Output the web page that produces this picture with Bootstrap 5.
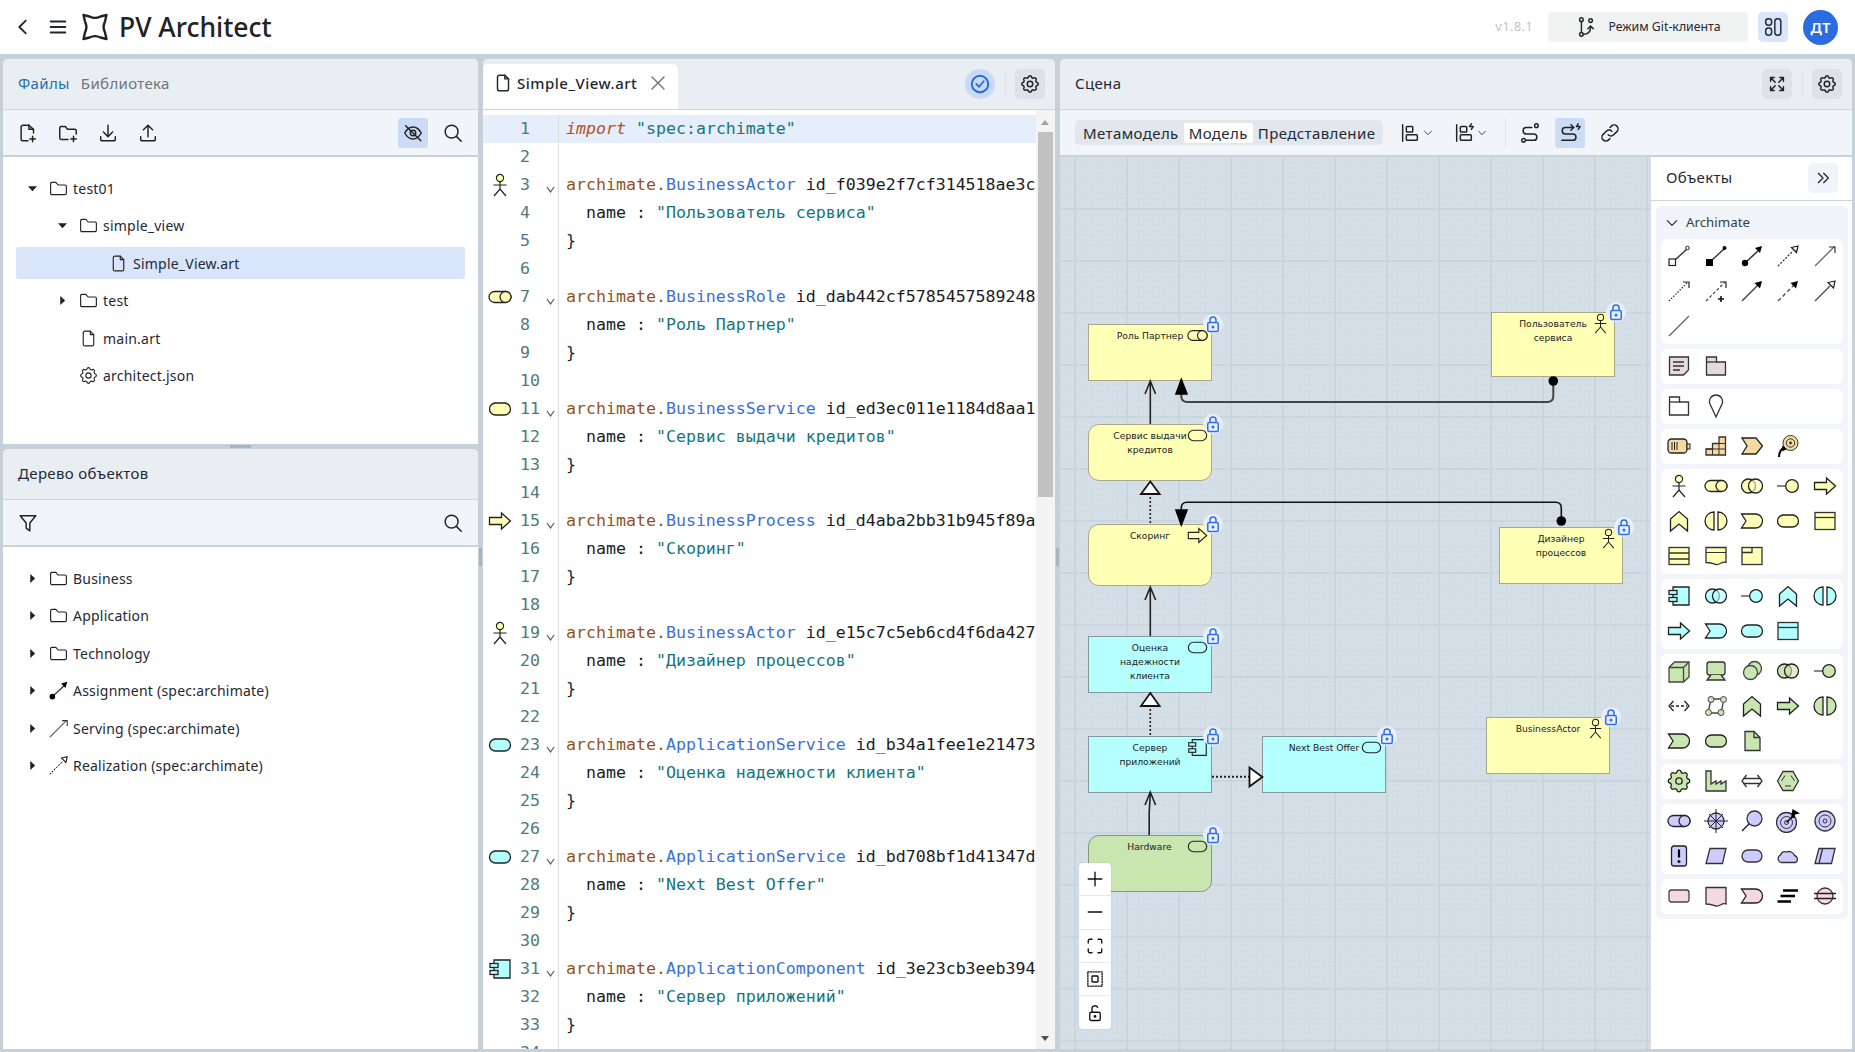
<!DOCTYPE html>
<html lang="ru">
<head>
<meta charset="UTF-8">
<meta name="viewport" content="width=device-width, initial-scale=1.0">
<title>PV Architect</title>
<link href="https://cdn.jsdelivr.net/npm/bootstrap@5.3.0/dist/css/bootstrap.min.css" rel="stylesheet">
<style>
    html, body { height: 100%; }
    body { background: #c6d0d9; font-family: "Noto Sans", "Liberation Sans", sans-serif; font-size: 14px; color: #1f2933; overflow: hidden; }
    svg { display: block; }
    .stroke-ico { width: 22px; height: 22px; fill: none; stroke: currentColor; stroke-width: 1.6; stroke-linecap: round; stroke-linejoin: round; }

    .app-header { height: 54px; background: #fff; padding: 0 17px 0 8px; }
    .header-btn { width: 30px; height: 30px; }
    .header-btn + .header-btn { margin-left: 5px; }
    .header-btn .stroke-ico { stroke-width: 2; }
    .app-logo { width: 28px; height: 28px; margin-left: 8px; }
    .app-title { font-size: 26.5px; font-weight: 500; line-height: 1; margin-left: 10px; color: #222; }
    .app-version { font-size: 13px; color: #c2c6ca; margin-right: 15px; letter-spacing: .3px; }
    .git-btn { width: 200px; height: 30px; background: #f0f2f2; border-radius: 5px; font-size: 12.3px; gap: 11px; margin-right: 10px; }
    .layout-btn { width: 30px; height: 30px; background: #d9e5fb; border-radius: 5px; margin-right: 15px; }
    .user-avatar { width: 35px; height: 35px; border-radius: 50%; background: #2b6ce0; color: #fff; font-weight: 600; font-size: 15px; }

    .workspace { height: calc(100vh - 54px); padding: 5px 3px 3px; }
    .col-left { width: 475px; flex: none; }
    .col-mid { width: 572px; flex: none; }
    .col-right { flex: 1 1 0; min-width: 0; }
    .splitter-v { width: 5px; flex: none; position: relative; }
    .splitter-v::after { content: ""; position: absolute; left: 1px; top: 489px; width: 3px; height: 18px; background: #a9b6c0; }
    .splitter-h { height: 5px; flex: none; position: relative; }
    .splitter-h::after { content: ""; position: absolute; left: 227px; top: 1px; width: 21px; height: 3px; background: #a9b6c0; }

    .pane { background: #fff; border-radius: 5px 5px 0 0; overflow: hidden; }
    .pane-top { height: 385px; flex: none; }
    .pane-head { height: 51px; flex: none; background: #e9eef2; border-bottom: 1px solid #ccd5dc; padding: 0 10px 0 15px; font-size: 15px; letter-spacing: .35px; }
    .head-label { margin-top: -2px; }
    .pane-tools { height: 47px; flex: none; background: #f1f5f9; border-bottom: 2px solid #c8d2db; padding: 0 10px; }
    .tab-on { color: #1f6fb2; }
    .tab-off { color: #6c757d; margin-left: 11px; }
    .tool-btn { width: 30px; height: 30px; border-radius: 3px; color: #222; flex: none; }
    .tool-step { margin-left: 2px; }
    .tool-on { background: #cddcf6; }
    .tool-soft { background: #dbe3e9; border-radius: 5px; }
    .tool-check { background: #c9d9f6; border-radius: 50%; }
    .head-sep { width: 1px; height: 30px; background: #dde4ea; margin: 0 9.5px; }

    .tree-list { padding-top: 15px; letter-spacing: .22px; }
    .tree-row { height: 32px; margin: 0 13px 5.5px; border-radius: 3px; }
    .tree-row.is-picked { background: #d9e5fb; }
    .tree-row.lvl-1 { padding-left: 30px; }
    .tree-row.lvl-2 { padding-left: 60px; }
    .tree-caret { width: 32px; flex: none; }
    .caret-shape { width: 9px; height: 9px; fill: #222; margin: 0 auto; }
    .tree-ico { width: 21px; height: 21px; margin-right: 4px; flex: none; color: #222; }
    .tree-ico.stroke-ico { stroke-width: 1.3; }

    .doc-tab { width: 195px; height: 45px; background: #fff; border-radius: 5px 5px 0 0; margin-left: -15px; padding: 0 0 7px 9px; font-size: 15px; font-weight: 500; letter-spacing: .5px; gap: 3px; align-self: flex-end; }
    .doc-close { width: 14px; height: 14px; margin-left: 11px; color: #6b7278; stroke-width: 1.4; }
    .editor-body { min-height: 0; }
    .code-scroll { padding-top: 5px; min-width: 0; overflow: hidden; }
    .code-line { height: 28px; font-family: "DejaVu Sans Mono", "Liberation Mono", monospace; font-size: 16.6px; line-height: 28px; white-space: pre; }
    .code-line.is-current { background: #e6edfb; }
    .gut-glyph { width: 37px; flex: none; }
    .gut-glyph svg { width: 24px; height: 24px; margin: 2px 0 0 5px; }
    .gut-num { width: 24px; flex: none; color: #4f7a7c; }
    .gut-fold { width: 14px; flex: none; border-right: 0; }
    .gut-fold svg { width: 9px; height: 7px; margin: 15px 0 0 2px; fill: none; stroke: #556; stroke-width: 1.2; }
    .code-text { border-left: 1px solid #dcdfe2; padding-left: 7px; flex: 1 1 0; min-width: 0; overflow: hidden; color: #1c1c1c; }
    .syn-kw { color: #b5501f; font-style: italic; }
    .syn-ns { color: #94511c; }
    .syn-type { color: #3b6fd6; }
    .syn-str { color: #17767c; }
    .code-bar { width: 19px; flex: none; background: #f4f4f4; position: relative; padding: 22px 2px 0; }
    .code-thumb { height: 365px; background: #c1c1c1; }
    .code-arrow { position: absolute; left: 5px; width: 0; height: 0; border-left: 4.5px solid transparent; border-right: 4.5px solid transparent; }
    .code-arrow.up { top: 10px; border-bottom: 5px solid #a3a3a3; }
    .code-arrow.down { bottom: 8px; border-top: 5px solid #505050; }

    .seg-group { height: 25px; background: #e1e7ec; border-radius: 5px; padding: 0 3px; margin-left: 5px; font-size: 15px; letter-spacing: .4px; }
    .seg-item { padding: 0 5px; height: 20px; line-height: 20px; border-radius: 2px; }
    .seg-item.is-on { background: #fff; }
    .drop-btn { gap: 2px; color: #222; margin-left: 16px; }
    .drop-btn + .drop-btn { margin-left: 20px; }
    .drop-chev { width: 10px; height: 10px; stroke-width: 2; }
    .tools-sep { width: 1px; height: 30px; background: #dde4ea; margin: 0 9px 0 18px; }
    .tools-gap { margin-left: 10px; }

    .diagram { width: 590px; flex: none; position: relative; overflow: hidden; background-color: #d5dfe7;
        background-image: linear-gradient(#d1dbe3 1px, transparent 1px), linear-gradient(90deg, #d1dbe3 1px, transparent 1px);
        background-size: 5.2px 5.2px; }
    .grid-h, .grid-v { position: absolute; inset: 0; pointer-events: none; }
    .grid-h { background: repeating-linear-gradient(to bottom, transparent 0 50px, #cad5dd 50px 52px); top: 1px; }
    .grid-v { background: repeating-linear-gradient(to right, transparent 0 50px, #cad5dd 50px 52px); left: -36px; }
    .edge-layer { position: absolute; left: 0; top: 0; width: 590px; height: 892px; z-index: 1; }
    .diag-node { position: absolute; width: 124px; height: 57px; border: 1.5px solid #8d8f86; text-align: center; font-family: "DejaVu Sans", sans-serif; font-size: 9.2px; line-height: 14px; padding-top: 4px; color: #222; }
    .node-yellow { background: #ffffb5; border-color: #a9a88a; }
    .node-cyan { background: #b5ffff; border-color: #86979b; }
    .node-green { background: #c9e5b0; border-color: #8a9286; }
    .node-round { border-radius: 11px; }
    .node-glyph { position: absolute; right: 3px; top: 0; width: 21px; height: 21px; }
    .node-lock { position: absolute; right: -12px; top: -11px; width: 20px; height: 20px; border-radius: 50%; background: #e9eff9; z-index: 2; }
    .node-lock svg { width: 18px; height: 18px; margin: 1px; fill: none; stroke: #2f6fed; stroke-width: 2; }
    .at-role { left: 28px; top: 167px; }
    .at-user { left: 431px; top: 155px; height: 65px; }
    .at-service { left: 28px; top: 267px; }
    .at-score { left: 28px; top: 367px; height: 62px; }
    .at-designer { left: 439px; top: 370px; }
    .at-assess { left: 28px; top: 479px; }
    .at-server { left: 28px; top: 579px; }
    .at-offer { left: 202px; top: 579px; }
    .at-bactor { left: 426px; top: 560px; }
    .at-hw { left: 27.5px; top: 678px; }
    .zoom-box { position: absolute; left: 19px; top: 706px; width: 32px; background: #fff; border-radius: 4px; z-index: 3; box-shadow: 0 0 2px rgba(0,0,0,.1); }
    .zoom-btn { height: 33.3px; border-bottom: 1px solid #e7eaed; color: #111; }
    .zoom-btn:last-child { border-bottom: 0; }
    .zoom-btn svg { width: 18px; height: 18px; stroke-width: 1.8; }

    .palette { min-width: 0; border-left: 1px solid #d4dde5; }
    .pal-head { height: 44px; flex: none; border-bottom: 1px solid #ccd5dc; padding: 0 14px 2px 15px; font-size: 15px; letter-spacing: .35px; }
    .pal-fold { width: 30px; height: 30px; background: #f1f5f9; border-radius: 5px; }
    .pal-fold svg { width: 16px; height: 16px; stroke-width: 2; }
    .pal-box { margin: 5px 4px 0 5px; background: #f1f5f9; border-radius: 6px; padding: 0 5px 5px; }
    .pal-title { height: 33px; font-size: 13.3px; padding-left: 4px; gap: 7px; color: #33404c; }
    .pal-title svg { width: 14px; height: 14px; stroke-width: 1.8; color: #222; }
    .pal-group { display: grid; grid-template-columns: repeat(5, 1fr); grid-auto-rows: 35px; background: #fff; border-radius: 6px; margin-bottom: 5px; }
    .pal-group:last-child { margin-bottom: 0; }
    .pal-ico { width: 24px; height: 24px; place-self: center; margin-bottom: 2px; }
    .t-note { color: #e6d9e2; }
    .t-none { color: #fff; }
    .t-strat { color: #f5d9a3; }
    .t-biz { color: #ffffb5; }
    .t-app { color: #b5ffff; }
    .t-tech { color: #c9e5b0; }
    .t-motiv { color: #ccccff; }
    .t-impl { color: #f5d8e0; }
</style>
</head>
<body>
<svg width="0" height="0" class="position-absolute">
    <defs>
        <!-- ui icons -->
        <symbol id="u-gear" viewBox="0 0 24 24"><path d="M10.325 4.317c.426-1.756 2.924-1.756 3.35 0a1.724 1.724 0 0 0 2.573 1.066c1.543-.94 3.31.826 2.37 2.37a1.724 1.724 0 0 0 1.065 2.572c1.756.426 1.756 2.924 0 3.35a1.724 1.724 0 0 0-1.066 2.573c.94 1.543-.826 3.31-2.37 2.37a1.724 1.724 0 0 0-2.572 1.065c-.426 1.756-2.924 1.756-3.35 0a1.724 1.724 0 0 0-2.573-1.066c-1.543.94-3.31-.826-2.37-2.37a1.724 1.724 0 0 0-1.065-2.572c-1.756-.426-1.756-2.924 0-3.35a1.724 1.724 0 0 0 1.066-2.573c-.94-1.543.826-3.31 2.37-2.37 1 .608 2.296.07 2.572-1.065z"/><circle cx="12" cy="12" r="3"/></symbol>
        <symbol id="u-search" viewBox="0 0 24 24"><circle cx="10.5" cy="10.5" r="7"/><path d="M15.7 15.7 21 21"/></symbol>
        <symbol id="u-folder" viewBox="0 0 24 24"><path d="M3 6.5a1.5 1.5 0 0 1 1.5-1.5H9l2.5 3h8A1.5 1.5 0 0 1 21 9.500v8a1.500 1.500 0 0 1-1.500 1.500h-15A1.500 1.500 0 0 1 3 17.500z"/></symbol>
        <symbol id="u-file" viewBox="0 0 24 24"><path d="M14 3.500H8A2 2 0 0 0 6 5.500v13a2 2 0 0 0 2 2h8a2 2 0 0 0 2-2V7.500z"/><path d="M14 3.500v4h4"/></symbol>
        <symbol id="u-file-add" viewBox="0 0 24 24"><path d="M13 3.500H6.500a2 2 0 0 0-2 2v13a2 2 0 0 0 2 2H12"/><path d="M13 3.500l5 4.500v4"/><path d="M13 3.500V8h5"/><path d="M17 15.500v6M14 18.500h6"/></symbol>
        <symbol id="u-folder-add" viewBox="0 0 24 24"><path d="M12 19H4.500A1.500 1.500 0 0 1 3 17.500v-11A1.500 1.500 0 0 1 4.500 5H9l2.500 3h8A1.500 1.500 0 0 1 21 9.500V13"/><path d="M18 15.500v6M15 18.500h6"/></symbol>
        <symbol id="u-down" viewBox="0 0 24 24"><path d="M12 3.500v12M7 11l5 5 5-5M4 16v2.500a2 2 0 0 0 2 2h12a2 2 0 0 0 2-2V16"/></symbol>
        <symbol id="u-up" viewBox="0 0 24 24"><path d="M12 16V4M7 8.500l5-5 5 5M4 16v2.500a2 2 0 0 0 2 2h12a2 2 0 0 0 2-2V16"/></symbol>
        <symbol id="u-eye-off" viewBox="0 0 24 24"><path d="M3 12c2.500-4.500 5.500-6.500 9-6.500s6.500 2 9 6.500c-2.500 4.500-5.500 6.500-9 6.500S5.500 16.500 3 12z"/><circle cx="12" cy="12" r="3"/><path d="M4 4l16.500 16.500"/></symbol>
        <symbol id="u-filter" viewBox="0 0 24 24"><path d="M3.500 4h17l-6.500 8v8.500l-4-3V12z"/></symbol>
        <symbol id="u-expand" viewBox="0 0 24 24"><path d="M5 9V5h4M19 9V5h-4M5 15v4h4M19 15v4h-4M5 5l5 5M19 5l-5 5M5 19l5-5M19 19l-5-5"/></symbol>
        <symbol id="u-align" viewBox="0 0 24 24"><path d="M4 3v18"/><rect x="8" y="5" width="7" height="6" rx="1"/><rect x="8" y="14" width="12" height="6" rx="1"/></symbol>
        <symbol id="u-align-auto" viewBox="0 0 24 24"><path d="M4 3v18"/><rect x="8" y="5" width="7" height="6" rx="1"/><rect x="8" y="14" width="12" height="6" rx="1"/><path d="M20 2l-2 3h4l-2 3"/></symbol>
        <symbol id="u-route" viewBox="0 0 24 24"><circle cx="5" cy="20" r="2"/><circle cx="19" cy="4" r="2"/><path d="M8 20h8a3.500 3.500 0 0 0 0-7H8a3.500 3.500 0 0 1 0-7h6"/></symbol>
        <symbol id="u-route-auto" viewBox="0 0 24 24"><path d="M3 20h12a3.500 3.500 0 0 0 0-7H7a3.500 3.500 0 0 1 0-7h9"/><path d="M13 3l3 3-3 3"/><path d="M21 2l-2 3h4l-2 3"/></symbol>
        <symbol id="u-link" viewBox="0 0 24 24"><path d="M10 14a4 4 0 0 0 6 0l3.500-3.500a4 4 0 0 0-6-6L12 6"/><path d="M14 10a4 4 0 0 0-6 0l-3.500 3.500a4 4 0 0 0 6 6L12 18"/></symbol>
        <symbol id="u-git" viewBox="0 0 24 24"><circle cx="7" cy="4" r="2"/><circle cx="7" cy="20" r="2"/><circle cx="17" cy="5" r="2"/><path d="M7 6v12M9 20c4 0 8-2 8-8M14 14l3-3 3 3"/></symbol>
        <symbol id="u-panels" viewBox="0 0 24 24"><rect x="4" y="3" width="6.500" height="7" rx="3"/><rect x="4" y="13" width="6.500" height="8" rx="3"/><rect x="14" y="3" width="6.500" height="18" rx="3"/></symbol>
        <symbol id="u-lock" viewBox="0 0 24 24"><rect x="5" y="10" width="14" height="12" rx="2"/><path d="M8 10V6.500a4 4 0 0 1 8 0V10"/><circle cx="12" cy="16" r="1" fill="#2f6fed"/></symbol>
        <symbol id="u-unlock" viewBox="0 0 24 24"><rect x="5" y="11" width="14" height="11" rx="2"/><path d="M8 11V6.500a4 4 0 0 1 7.500-2"/><circle cx="12" cy="16.500" r="1" fill="#111"/></symbol>

        <!-- relations -->
        <symbol id="r-compo" viewBox="0 0 24 24"><path d="M8 16 20 5" stroke="#333" stroke-width="1.400"/><rect x="2" y="15" width="6.500" height="6.500" fill="#fff" stroke="#222" stroke-width="1.200"/><circle cx="20.500" cy="4" r="1.800" fill="#fff" stroke="#222"/></symbol>
        <symbol id="r-aggr" viewBox="0 0 24 24"><path d="M8 16 20 5" stroke="#333" stroke-width="1.400"/><rect x="2" y="15" width="7" height="7" fill="#000"/><circle cx="20.500" cy="4" r="2" fill="#000"/></symbol>
        <symbol id="r-assign" viewBox="0 0 24 24"><path d="M5 19 19 6" stroke="#333" stroke-width="1.500"/><circle cx="5" cy="19" r="3.200" fill="#000"/><path d="M22 2l-7 2 5 5z" fill="#000"/></symbol>
        <symbol id="r-real" viewBox="0 0 24 24"><path d="M2 22 17 7" stroke="#222" stroke-width="1.200" stroke-dasharray="2 1.500"/><path d="M22 2l-6.500 1.500 5 5z" fill="#fff" stroke="#111" stroke-width="1.200"/></symbol>
        <symbol id="r-serve" viewBox="0 0 24 24"><path d="M2 22 21.500 2.500" stroke="#666" stroke-width="1.300"/><path d="M16 3h6v6" fill="none" stroke="#333" stroke-width="1.200"/></symbol>
        <symbol id="r-access" viewBox="0 0 24 24"><path d="M2 22 21 3" stroke="#222" stroke-width="1.200" stroke-dasharray="1.500 1.500"/><path d="M16 3h6v6" fill="none" stroke="#222" stroke-width="1.200"/></symbol>
        <symbol id="r-infl" viewBox="0 0 24 24"><path d="M2 22 21 3" stroke="#444" stroke-width="1.200" stroke-dasharray="3 2"/><path d="M16 3h6v6" fill="none" stroke="#222" stroke-width="1.200"/><path d="M14 20h6M17 17v6" stroke="#111" stroke-width="1.600"/></symbol>
        <symbol id="r-trig" viewBox="0 0 24 24"><path d="M2 22 18 6" stroke="#444" stroke-width="1.400"/><path d="M22 2l-7.500 2 5.500 5.500z" fill="#000"/></symbol>
        <symbol id="r-flow" viewBox="0 0 24 24"><path d="M2 22 18 6" stroke="#555" stroke-width="1.400" stroke-dasharray="4 2.500"/><path d="M22 2l-7.500 2 5.500 5.500z" fill="#000"/></symbol>
        <symbol id="r-spec" viewBox="0 0 24 24"><path d="M2 22 17 7" stroke="#555" stroke-width="1.400"/><path d="M22 2l-7 1.500 5.500 5.500z" fill="#fff" stroke="#222" stroke-width="1.200"/></symbol>
        <symbol id="r-assoc" viewBox="0 0 24 24"><path d="M2 22 22 2" stroke="#666" stroke-width="1.300"/></symbol>

        <!-- archimate elements, fill follows the tone class -->
        <symbol id="a-note" viewBox="0 0 24 24"><path d="M2.500 3h19v13l-5 5h-14z" fill="currentColor" stroke="#333" stroke-width="1.300"/><path d="M6 8h11M6 12h11M6 16h7" stroke="#333" stroke-width="1.300"/></symbol>
        <symbol id="a-group" viewBox="0 0 24 24"><path d="M2.500 6.500V3h10v5h9v13h-19z" fill="currentColor" stroke="#333" stroke-width="1.300"/><path d="M2.500 8h10" stroke="#333" stroke-width="1.300"/></symbol>
        <symbol id="a-loc" viewBox="0 0 24 24"><path d="M12 23 6 10a6.500 6.500 0 1 1 12 0z" fill="currentColor" stroke="#333" stroke-width="1.300"/></symbol>
        <symbol id="a-resource" viewBox="0 0 24 24"><rect x="1" y="5" width="19" height="14" rx="3.500" fill="currentColor" stroke="#222" stroke-width="1.300"/><rect x="20" y="10" width="3" height="5" fill="currentColor" stroke="#222"/><path d="M5 8v8M7.500 8v8M10 8v8" stroke="#222"/></symbol>
        <symbol id="a-capab" viewBox="0 0 24 24"><path d="M2 21v-6h6.500V9.500H15V3h6.500v18z" fill="currentColor" stroke="#333" stroke-width="1.300"/><path d="M2 15h19.500M8.500 9.500h13M8.500 15v6M15 9.500V21" stroke="#333"/></symbol>
        <symbol id="a-stream" viewBox="0 0 24 24"><path d="M2 4h14l6.500 8-6.500 8H2l5-8z" fill="currentColor" stroke="#222" stroke-width="1.300"/></symbol>
        <symbol id="a-course" viewBox="0 0 24 24"><circle cx="14.500" cy="9" r="7.500" fill="currentColor" stroke="#333"/><circle cx="14.500" cy="9" r="4.200" fill="none" stroke="#333"/><circle cx="14.500" cy="9" r="1.400" fill="#333"/><path d="M3 23c0-5 2-8 5.500-9.500" fill="none" stroke="#000" stroke-width="2"/><path d="M11 15 6 11.500l.5 6z" fill="#000"/></symbol>
        <symbol id="a-actor" viewBox="0 0 24 24"><circle cx="12" cy="5" r="3.600" fill="currentColor" stroke="#222" stroke-width="1.200"/><path d="M12 8.600V16M5.500 12h13M12 16l-6 7M12 16l6 7" fill="none" stroke="#222" stroke-width="1.200"/></symbol>
        <symbol id="a-role" viewBox="0 0 24 24"><rect x="1" y="6.500" width="22" height="11" rx="5.500" fill="currentColor" stroke="#222" stroke-width="1.300"/><circle cx="17.500" cy="12" r="5.500" fill="currentColor" stroke="#222" stroke-width="1.300"/></symbol>
        <symbol id="a-collab" viewBox="0 0 24 24"><circle cx="8.500" cy="12" r="7" fill="currentColor" stroke="#222" stroke-width="1.300"/><circle cx="15.500" cy="12" r="7" fill="currentColor" fill-opacity=".6" stroke="#222" stroke-width="1.300"/></symbol>
        <symbol id="a-iface" viewBox="0 0 24 24"><path d="M1 12h9" stroke="#444" stroke-width="1.300"/><circle cx="16" cy="12" r="6.300" fill="currentColor" stroke="#222" stroke-width="1.300"/></symbol>
        <symbol id="a-process" viewBox="0 0 24 24"><path d="M1.500 8.500h12V4l9 8-9 8v-4.500h-12z" fill="currentColor" stroke="#222" stroke-width="1.300"/></symbol>
        <symbol id="a-func" viewBox="0 0 24 24"><path d="M3.500 22V10L12 2.500 20.500 10v12L12 15z" fill="currentColor" stroke="#222" stroke-width="1.300"/></symbol>
        <symbol id="a-interact" viewBox="0 0 24 24"><path d="M10 3a9 9 0 0 0 0 18z" fill="currentColor" stroke="#222" stroke-width="1.300"/><path d="M14 3a9 9 0 0 1 0 18z" fill="currentColor" stroke="#222" stroke-width="1.300"/></symbol>
        <symbol id="a-event" viewBox="0 0 24 24"><path d="M1.500 5h14a7 7 0 0 1 0 14h-14l4.500-7z" fill="currentColor" stroke="#222" stroke-width="1.300"/></symbol>
        <symbol id="a-service" viewBox="0 0 24 24"><rect x="1.500" y="6" width="21" height="12" rx="6" fill="currentColor" stroke="#222" stroke-width="1.300"/></symbol>
        <symbol id="a-object" viewBox="0 0 24 24"><rect x="2" y="3.500" width="20" height="17" fill="currentColor" stroke="#333" stroke-width="1.300"/><path d="M2 8.500h20" stroke="#333" stroke-width="1.300"/></symbol>
        <symbol id="a-contract" viewBox="0 0 24 24"><rect x="2" y="3.500" width="20" height="17" fill="currentColor" stroke="#333" stroke-width="1.300"/><path d="M2 9h20M2 15h20" stroke="#333" stroke-width="1.300"/></symbol>
        <symbol id="a-repr" viewBox="0 0 24 24"><path d="M2 3.500h20v15c-4-2-6 3-10 2s-6-2-10-2z" fill="currentColor" stroke="#333" stroke-width="1.300"/><path d="M2 8.500h20" stroke="#333"/></symbol>
        <symbol id="a-product" viewBox="0 0 24 24"><rect x="2" y="3.500" width="20" height="17" fill="currentColor" stroke="#333" stroke-width="1.300"/><path d="M2 8.500h10V3.500" fill="none" stroke="#333" stroke-width="1.300"/></symbol>
        <symbol id="a-comp" viewBox="0 0 24 24"><path d="M6 3h16v18H6z" fill="currentColor" stroke="#222" stroke-width="1.300"/><rect x="2" y="6.500" width="8" height="4" fill="currentColor" stroke="#222" stroke-width="1.300"/><rect x="2" y="13.500" width="8" height="4" fill="currentColor" stroke="#222" stroke-width="1.300"/></symbol>
        <symbol id="a-node" viewBox="0 0 24 24"><path d="M2 8.500 7.500 3H22v15l-5.500 5H2z" fill="currentColor" stroke="#444" stroke-width="1.300"/><path d="M2 8.500h14.500V23M16.500 8.500 22 3" fill="none" stroke="#444" stroke-width="1.300"/></symbol>
        <symbol id="a-device" viewBox="0 0 24 24"><rect x="3" y="3" width="18" height="13" rx="2.500" fill="currentColor" stroke="#333" stroke-width="1.300"/><path d="M7 16l-4 5h18l-4-5" fill="currentColor" stroke="#333" stroke-width="1.300"/></symbol>
        <symbol id="a-soft" viewBox="0 0 24 24"><circle cx="14.500" cy="9.500" r="7" fill="currentColor" stroke="#444" stroke-width="1.300"/><circle cx="10.500" cy="13.500" r="7" fill="currentColor" stroke="#444" stroke-width="1.300"/></symbol>
        <symbol id="a-path" viewBox="0 0 24 24"><path d="M6.500 7 2 12l4.500 5M17.500 7l4.500 5-4.500 5" fill="none" stroke="#222" stroke-width="1.300"/><path d="M4 12h16" stroke="#222" stroke-width="1.300" stroke-dasharray="3 2"/></symbol>
        <symbol id="a-network" viewBox="0 0 24 24"><path d="M7 5h13L17 19H4z" fill="none" stroke="#444" stroke-width="1.300"/><circle cx="7" cy="5.500" r="3" fill="currentColor" stroke="#444"/><circle cx="19.500" cy="5.500" r="3" fill="currentColor" stroke="#444"/><circle cx="4.500" cy="18.500" r="3" fill="currentColor" stroke="#444"/><circle cx="17" cy="18.500" r="3" fill="currentColor" stroke="#444"/></symbol>
        <symbol id="a-artifact" viewBox="0 0 24 24"><path d="M5 2.500h9l6 6v13H5z" fill="currentColor" stroke="#333" stroke-width="1.300"/><path d="M14 2.500v6h6" fill="none" stroke="#333" stroke-width="1.300"/></symbol>
        <symbol id="a-equip" viewBox="0 0 24 24"><path d="M10.325 4.317c.426-1.756 2.924-1.756 3.35 0a1.724 1.724 0 0 0 2.573 1.066c1.543-.94 3.31.826 2.37 2.37a1.724 1.724 0 0 0 1.065 2.572c1.756.426 1.756 2.924 0 3.35a1.724 1.724 0 0 0-1.066 2.573c.94 1.543-.826 3.31-2.37 2.37a1.724 1.724 0 0 0-2.572 1.065c-.426 1.756-2.924 1.756-3.35 0a1.724 1.724 0 0 0-2.573-1.066c-1.543.94-3.31-.826-2.37-2.37a1.724 1.724 0 0 0-1.065-2.572c-1.756-.426-1.756-2.924 0-3.35a1.724 1.724 0 0 0 1.066-2.573c-.94-1.543.826-3.31 2.37-2.37 1 .608 2.296.07 2.572-1.065z" transform="translate(-2.400 -2.400) scale(1.200)" fill="currentColor" stroke="#222" stroke-width="1.100"/><circle cx="12" cy="12" r="3.200" fill="none" stroke="#222" stroke-width="1.300"/></symbol>
        <symbol id="a-factory" viewBox="0 0 24 24"><path d="M2 2h5v13l5-3v3l5-3v3l5-3v10H2z" fill="currentColor" stroke="#333" stroke-width="1.300"/></symbol>
        <symbol id="a-distrib" viewBox="0 0 24 24"><path d="M6.500 6 2 12l4.500 6M17.500 6 22 12l-4.500 6M3 9.500h18M3 14.500h18" fill="none" stroke="#333" stroke-width="1.300"/></symbol>
        <symbol id="a-material" viewBox="0 0 24 24"><path d="M7 2.500h10l5.500 9.500-5.500 9.500H7L1.500 12z" fill="currentColor" stroke="#333" stroke-width="1.300"/><path d="M9 6.500 5.500 12M15 6.500l3.500 5.500M9 17h6" fill="none" stroke="#333"/></symbol>
        <symbol id="a-driver" viewBox="0 0 24 24"><circle cx="12" cy="12" r="8" fill="currentColor" stroke="#333" stroke-width="1.300"/><path d="M12 0v24M0 12h24M5 5l14 14M19 5 5 19" stroke="#222"/></symbol>
        <symbol id="a-assess" viewBox="0 0 24 24"><circle cx="14.500" cy="9.500" r="7.500" fill="currentColor" stroke="#333" stroke-width="1.300"/><path d="M9 15 2 22" stroke="#222" stroke-width="1.500"/></symbol>
        <symbol id="a-goal" viewBox="0 0 24 24"><circle cx="10.500" cy="13.500" r="10" fill="currentColor" stroke="#333" stroke-width="1.300"/><circle cx="10.500" cy="13.500" r="6" fill="none" stroke="#333"/><circle cx="10.500" cy="13.500" r="2" fill="none" stroke="#333"/><path d="M10.500 13.500 17 7" stroke="#000" stroke-width="1.500"/><path d="M15 9 16.500 0 24 4.500 19 5.500 18.500 9z" fill="#000"/></symbol>
        <symbol id="a-outcome" viewBox="0 0 24 24"><circle cx="12" cy="12" r="10" fill="currentColor" stroke="#333" stroke-width="1.300"/><circle cx="12" cy="12" r="6" fill="none" stroke="#333"/><circle cx="12" cy="12" r="2" fill="none" stroke="#333"/></symbol>
        <symbol id="a-principle" viewBox="0 0 24 24"><rect x="4.500" y="2" width="15" height="20" rx="2.500" fill="currentColor" stroke="#222" stroke-width="1.300"/><path d="M12 5.500v8" stroke="#000" stroke-width="2.200"/><circle cx="12" cy="17.500" r="1.500" fill="#000"/></symbol>
        <symbol id="a-require" viewBox="0 0 24 24"><path d="M6 4.500h16l-3.500 15H2z" fill="currentColor" stroke="#333" stroke-width="1.300"/></symbol>
        <symbol id="a-constr" viewBox="0 0 24 24"><path d="M6 4.500h16l-3.500 15H2z" fill="currentColor" stroke="#333" stroke-width="1.300"/><path d="M9.500 4.500 6 19.500" stroke="#333" stroke-width="1.300"/></symbol>
        <symbol id="a-value" viewBox="0 0 24 24"><rect x="2" y="6" width="20" height="12" rx="6" fill="currentColor" stroke="#333" stroke-width="1.300"/></symbol>
        <symbol id="a-cloud" viewBox="0 0 24 24"><path d="M5 18.500a4 4 0 0 1-.5-7.500 4.500 4.500 0 0 1 6-3 6 6 0 0 1 8 3.500 3.800 3.800 0 0 1 1 7z" fill="currentColor" stroke="#333" stroke-width="1.300"/></symbol>
        <symbol id="a-work" viewBox="0 0 24 24"><rect x="2" y="6" width="20" height="12" rx="2.500" fill="currentColor" stroke="#444" stroke-width="1.300"/></symbol>
        <symbol id="a-deliv" viewBox="0 0 24 24"><path d="M2 3.500h20V20c-4-2-6 3-10 2S6 20 2 20z" fill="currentColor" stroke="#333" stroke-width="1.300"/></symbol>
        <symbol id="a-plateau" viewBox="0 0 24 24"><path d="M7 6.500h15M4.500 12H19M1.500 17.500H15" stroke="#000" stroke-width="2.400"/></symbol>
        <symbol id="a-gap" viewBox="0 0 24 24"><circle cx="12" cy="12" r="8" fill="currentColor" stroke="#333" stroke-width="1.300"/><path d="M1 9.500h22M1 14.500h22" stroke="#222" stroke-width="1.300"/></symbol>
    </defs>
</svg>

<header class="app-header d-flex align-items-center">
    <span class="header-btn d-flex align-items-center justify-content-center"><svg class="stroke-ico" viewBox="0 0 24 24"><path d="M15 5l-7 7 7 7"/></svg></span>
    <span class="header-btn d-flex align-items-center justify-content-center"><svg class="stroke-ico" viewBox="0 0 24 24"><path d="M4 6h16M4 12h16M4 18h16"/></svg></span>
    <svg class="app-logo" viewBox="0 0 28 28" fill="none" stroke="#222" stroke-width="2.400" stroke-linejoin="round" stroke-linecap="round"><path d="M8.500 3.500 2.500 2 4 8.500c1.800 3.500 1.800 7.500 0 11l-1.500 6.500 6-1.500c3.500-1.800 7.500-1.800 11 0l6 1.500-1.500-6.500c-1.800-3.500-1.800-7.500 0-11l1.500-6.500-6 1.500c-3.500 1.800-7.500 1.800-11 0z"/></svg>
    <span class="app-title">PV Architect</span>
    <span class="ms-auto app-version">v1.8.1</span>
    <span class="git-btn d-flex align-items-center justify-content-center"><svg class="stroke-ico" viewBox="0 0 24 24"><use href="#u-git"/></svg>Режим Git-клиента</span>
    <span class="layout-btn d-flex align-items-center justify-content-center"><svg class="stroke-ico" viewBox="0 0 24 24"><use href="#u-panels"/></svg></span>
    <span class="user-avatar d-flex align-items-center justify-content-center">ДТ</span>
</header>

<main class="workspace d-flex">
    <div class="col-left d-flex flex-column">
        <section class="pane pane-top d-flex flex-column">
            <div class="pane-head d-flex align-items-center"><span class="tab-on head-label">Файлы</span><span class="tab-off head-label">Библиотека</span></div>
            <div class="pane-tools d-flex align-items-center gap-2">
                <span class="tool-btn d-flex align-items-center justify-content-center"><svg class="stroke-ico"><use href="#u-file-add"/></svg></span>
                <span class="tool-btn tool-step d-flex align-items-center justify-content-center"><svg class="stroke-ico"><use href="#u-folder-add"/></svg></span>
                <span class="tool-btn tool-step d-flex align-items-center justify-content-center"><svg class="stroke-ico"><use href="#u-down"/></svg></span>
                <span class="tool-btn tool-step d-flex align-items-center justify-content-center"><svg class="stroke-ico"><use href="#u-up"/></svg></span>
                <span class="tool-btn tool-on d-flex align-items-center justify-content-center ms-auto"><svg class="stroke-ico"><use href="#u-eye-off"/></svg></span>
                <span class="tool-btn tool-step d-flex align-items-center justify-content-center"><svg class="stroke-ico"><use href="#u-search"/></svg></span>
            </div>
            <div class="tree-list">
                <div class="tree-row d-flex align-items-center"><span class="tree-caret"><svg class="caret-shape" viewBox="0 0 10 10"><path d="M0 2.500h10L5 8z"/></svg></span><svg class="tree-ico stroke-ico"><use href="#u-folder"/></svg>test01</div>
                <div class="tree-row lvl-1 d-flex align-items-center"><span class="tree-caret"><svg class="caret-shape" viewBox="0 0 10 10"><path d="M0 2.500h10L5 8z"/></svg></span><svg class="tree-ico stroke-ico"><use href="#u-folder"/></svg>simple_view</div>
                <div class="tree-row lvl-2 is-picked d-flex align-items-center"><span class="tree-caret"></span><svg class="tree-ico stroke-ico"><use href="#u-file"/></svg>Simple_View.art</div>
                <div class="tree-row lvl-1 d-flex align-items-center"><span class="tree-caret"><svg class="caret-shape" viewBox="0 0 10 10"><path d="M2.500 0v10L8 5z"/></svg></span><svg class="tree-ico stroke-ico"><use href="#u-folder"/></svg>test</div>
                <div class="tree-row lvl-1 d-flex align-items-center"><span class="tree-caret"></span><svg class="tree-ico stroke-ico"><use href="#u-file"/></svg>main.art</div>
                <div class="tree-row lvl-1 d-flex align-items-center"><span class="tree-caret"></span><svg class="tree-ico stroke-ico"><use href="#u-gear"/></svg>architect.json</div>
            </div>
        </section>
        <div class="splitter-h"></div>
        <section class="pane flex-grow-1 d-flex flex-column">
            <div class="pane-head d-flex align-items-center"><span class="head-label">Дерево объектов</span></div>
            <div class="pane-tools d-flex align-items-center justify-content-between">
                <span class="tool-btn d-flex align-items-center justify-content-center"><svg class="stroke-ico"><use href="#u-filter"/></svg></span>
                <span class="tool-btn d-flex align-items-center justify-content-center"><svg class="stroke-ico"><use href="#u-search"/></svg></span>
            </div>
            <div class="tree-list">
                <div class="tree-row d-flex align-items-center"><span class="tree-caret"><svg class="caret-shape" viewBox="0 0 10 10"><path d="M2.500 0v10L8 5z"/></svg></span><svg class="tree-ico stroke-ico"><use href="#u-folder"/></svg>Business</div>
                <div class="tree-row d-flex align-items-center"><span class="tree-caret"><svg class="caret-shape" viewBox="0 0 10 10"><path d="M2.500 0v10L8 5z"/></svg></span><svg class="tree-ico stroke-ico"><use href="#u-folder"/></svg>Application</div>
                <div class="tree-row d-flex align-items-center"><span class="tree-caret"><svg class="caret-shape" viewBox="0 0 10 10"><path d="M2.500 0v10L8 5z"/></svg></span><svg class="tree-ico stroke-ico"><use href="#u-folder"/></svg>Technology</div>
                <div class="tree-row d-flex align-items-center"><span class="tree-caret"><svg class="caret-shape" viewBox="0 0 10 10"><path d="M2.500 0v10L8 5z"/></svg></span><svg class="tree-ico"><use href="#r-assign"/></svg>Assignment (spec:archimate)</div>
                <div class="tree-row d-flex align-items-center"><span class="tree-caret"><svg class="caret-shape" viewBox="0 0 10 10"><path d="M2.500 0v10L8 5z"/></svg></span><svg class="tree-ico"><use href="#r-serve"/></svg>Serving (spec:archimate)</div>
                <div class="tree-row d-flex align-items-center"><span class="tree-caret"><svg class="caret-shape" viewBox="0 0 10 10"><path d="M2.500 0v10L8 5z"/></svg></span><svg class="tree-ico"><use href="#r-real"/></svg>Realization (spec:archimate)</div>
            </div>
        </section>
    </div>
    <div class="splitter-v"></div>

    <section class="col-mid pane d-flex flex-column">
        <div class="pane-head d-flex align-items-center">
            <div class="doc-tab d-flex align-items-center"><svg class="stroke-ico"><use href="#u-file"/></svg>Simple_View.art<svg class="doc-close stroke-ico" viewBox="0 0 14 14"><path d="M1 1l12 12M13 1 1 13"/></svg></div>
            <span class="tool-btn tool-check d-flex align-items-center justify-content-center ms-auto"><svg class="stroke-ico" viewBox="0 0 24 24"><circle cx="12" cy="12" r="9" stroke="#2b6ce0" stroke-width="2.200"/><path d="M8 12l3 3 5-6" stroke="#2b6ce0" stroke-width="2"/></svg></span>
            <span class="head-sep"></span>
            <span class="tool-btn tool-soft d-flex align-items-center justify-content-center"><svg class="stroke-ico"><use href="#u-gear"/></svg></span>
        </div>
        <div class="editor-body flex-grow-1 d-flex">
            <div class="code-scroll flex-grow-1">
                <div class="code-line is-current d-flex"><span class="gut-glyph"></span><span class="gut-num">1</span><span class="gut-fold"></span><span class="code-text"><span class="syn-kw">import</span> <span class="syn-str">"spec:archimate"</span></span></div>
                <div class="code-line d-flex"><span class="gut-glyph"></span><span class="gut-num">2</span><span class="gut-fold"></span><span class="code-text"></span></div>
                <div class="code-line d-flex"><span class="gut-glyph t-biz"><svg><use href="#a-actor"/></svg></span><span class="gut-num">3</span><span class="gut-fold"><svg viewBox="0 0 9 7"><path d="M1 1l3.500 5L8 1"/></svg></span><span class="code-text"><span class="syn-ns">archimate.</span><span class="syn-type">BusinessActor</span> id_f039e2f7cf314518ae3c81</span></div>
                <div class="code-line d-flex"><span class="gut-glyph"></span><span class="gut-num">4</span><span class="gut-fold"></span><span class="code-text">  name : <span class="syn-str">"Пользователь сервиса"</span></span></div>
                <div class="code-line d-flex"><span class="gut-glyph"></span><span class="gut-num">5</span><span class="gut-fold"></span><span class="code-text">}</span></div>
                <div class="code-line d-flex"><span class="gut-glyph"></span><span class="gut-num">6</span><span class="gut-fold"></span><span class="code-text"></span></div>
                <div class="code-line d-flex"><span class="gut-glyph t-biz"><svg><use href="#a-role"/></svg></span><span class="gut-num">7</span><span class="gut-fold"><svg viewBox="0 0 9 7"><path d="M1 1l3.500 5L8 1"/></svg></span><span class="code-text"><span class="syn-ns">archimate.</span><span class="syn-type">BusinessRole</span> id_dab442cf5785457589248a</span></div>
                <div class="code-line d-flex"><span class="gut-glyph"></span><span class="gut-num">8</span><span class="gut-fold"></span><span class="code-text">  name : <span class="syn-str">"Роль Партнер"</span></span></div>
                <div class="code-line d-flex"><span class="gut-glyph"></span><span class="gut-num">9</span><span class="gut-fold"></span><span class="code-text">}</span></div>
                <div class="code-line d-flex"><span class="gut-glyph"></span><span class="gut-num">10</span><span class="gut-fold"></span><span class="code-text"></span></div>
                <div class="code-line d-flex"><span class="gut-glyph t-biz"><svg><use href="#a-service"/></svg></span><span class="gut-num">11</span><span class="gut-fold"><svg viewBox="0 0 9 7"><path d="M1 1l3.500 5L8 1"/></svg></span><span class="code-text"><span class="syn-ns">archimate.</span><span class="syn-type">BusinessService</span> id_ed3ec011e1184d8aa1b4</span></div>
                <div class="code-line d-flex"><span class="gut-glyph"></span><span class="gut-num">12</span><span class="gut-fold"></span><span class="code-text">  name : <span class="syn-str">"Сервис выдачи кредитов"</span></span></div>
                <div class="code-line d-flex"><span class="gut-glyph"></span><span class="gut-num">13</span><span class="gut-fold"></span><span class="code-text">}</span></div>
                <div class="code-line d-flex"><span class="gut-glyph"></span><span class="gut-num">14</span><span class="gut-fold"></span><span class="code-text"></span></div>
                <div class="code-line d-flex"><span class="gut-glyph t-biz"><svg><use href="#a-process"/></svg></span><span class="gut-num">15</span><span class="gut-fold"><svg viewBox="0 0 9 7"><path d="M1 1l3.500 5L8 1"/></svg></span><span class="code-text"><span class="syn-ns">archimate.</span><span class="syn-type">BusinessProcess</span> id_d4aba2bb31b945f89a7c</span></div>
                <div class="code-line d-flex"><span class="gut-glyph"></span><span class="gut-num">16</span><span class="gut-fold"></span><span class="code-text">  name : <span class="syn-str">"Скоринг"</span></span></div>
                <div class="code-line d-flex"><span class="gut-glyph"></span><span class="gut-num">17</span><span class="gut-fold"></span><span class="code-text">}</span></div>
                <div class="code-line d-flex"><span class="gut-glyph"></span><span class="gut-num">18</span><span class="gut-fold"></span><span class="code-text"></span></div>
                <div class="code-line d-flex"><span class="gut-glyph t-biz"><svg><use href="#a-actor"/></svg></span><span class="gut-num">19</span><span class="gut-fold"><svg viewBox="0 0 9 7"><path d="M1 1l3.500 5L8 1"/></svg></span><span class="code-text"><span class="syn-ns">archimate.</span><span class="syn-type">BusinessActor</span> id_e15c7c5eb6cd4f6da42719</span></div>
                <div class="code-line d-flex"><span class="gut-glyph"></span><span class="gut-num">20</span><span class="gut-fold"></span><span class="code-text">  name : <span class="syn-str">"Дизайнер процессов"</span></span></div>
                <div class="code-line d-flex"><span class="gut-glyph"></span><span class="gut-num">21</span><span class="gut-fold"></span><span class="code-text">}</span></div>
                <div class="code-line d-flex"><span class="gut-glyph"></span><span class="gut-num">22</span><span class="gut-fold"></span><span class="code-text"></span></div>
                <div class="code-line d-flex"><span class="gut-glyph t-app"><svg><use href="#a-service"/></svg></span><span class="gut-num">23</span><span class="gut-fold"><svg viewBox="0 0 9 7"><path d="M1 1l3.500 5L8 1"/></svg></span><span class="code-text"><span class="syn-ns">archimate.</span><span class="syn-type">ApplicationService</span> id_b34a1fee1e21473c9</span></div>
                <div class="code-line d-flex"><span class="gut-glyph"></span><span class="gut-num">24</span><span class="gut-fold"></span><span class="code-text">  name : <span class="syn-str">"Оценка надежности клиента"</span></span></div>
                <div class="code-line d-flex"><span class="gut-glyph"></span><span class="gut-num">25</span><span class="gut-fold"></span><span class="code-text">}</span></div>
                <div class="code-line d-flex"><span class="gut-glyph"></span><span class="gut-num">26</span><span class="gut-fold"></span><span class="code-text"></span></div>
                <div class="code-line d-flex"><span class="gut-glyph t-app"><svg><use href="#a-service"/></svg></span><span class="gut-num">27</span><span class="gut-fold"><svg viewBox="0 0 9 7"><path d="M1 1l3.500 5L8 1"/></svg></span><span class="code-text"><span class="syn-ns">archimate.</span><span class="syn-type">ApplicationService</span> id_bd708bf1d41347d2a</span></div>
                <div class="code-line d-flex"><span class="gut-glyph"></span><span class="gut-num">28</span><span class="gut-fold"></span><span class="code-text">  name : <span class="syn-str">"Next Best Offer"</span></span></div>
                <div class="code-line d-flex"><span class="gut-glyph"></span><span class="gut-num">29</span><span class="gut-fold"></span><span class="code-text">}</span></div>
                <div class="code-line d-flex"><span class="gut-glyph"></span><span class="gut-num">30</span><span class="gut-fold"></span><span class="code-text"></span></div>
                <div class="code-line d-flex"><span class="gut-glyph t-app"><svg><use href="#a-comp"/></svg></span><span class="gut-num">31</span><span class="gut-fold"><svg viewBox="0 0 9 7"><path d="M1 1l3.500 5L8 1"/></svg></span><span class="code-text"><span class="syn-ns">archimate.</span><span class="syn-type">ApplicationComponent</span> id_3e23cb3eeb3947f1</span></div>
                <div class="code-line d-flex"><span class="gut-glyph"></span><span class="gut-num">32</span><span class="gut-fold"></span><span class="code-text">  name : <span class="syn-str">"Сервер приложений"</span></span></div>
                <div class="code-line d-flex"><span class="gut-glyph"></span><span class="gut-num">33</span><span class="gut-fold"></span><span class="code-text">}</span></div>
                <div class="code-line d-flex"><span class="gut-glyph"></span><span class="gut-num">34</span><span class="gut-fold"></span><span class="code-text"></span></div>
            </div>
            <div class="code-bar"><span class="code-arrow up"></span><div class="code-thumb"></div><span class="code-arrow down"></span></div>
        </div>
    </section>
    <div class="splitter-v"></div>

    <section class="col-right pane d-flex flex-column">
        <div class="pane-head d-flex align-items-center">
            <span class="head-label">Сцена</span>
            <span class="tool-btn tool-soft d-flex align-items-center justify-content-center ms-auto"><svg class="stroke-ico"><use href="#u-expand"/></svg></span>
            <span class="head-sep"></span>
            <span class="tool-btn tool-soft d-flex align-items-center justify-content-center"><svg class="stroke-ico"><use href="#u-gear"/></svg></span>
        </div>
        <div class="pane-tools d-flex align-items-center">
            <div class="seg-group d-flex align-items-center"><span class="seg-item">Метамодель</span><span class="seg-item is-on">Модель</span><span class="seg-item">Представление</span></div>
            <span class="drop-btn d-flex align-items-center"><svg class="stroke-ico"><use href="#u-align"/></svg><svg class="drop-chev stroke-ico" viewBox="0 0 24 24"><path d="M4 8l8 8 8-8"/></svg></span>
            <span class="drop-btn d-flex align-items-center"><svg class="stroke-ico"><use href="#u-align-auto"/></svg><svg class="drop-chev stroke-ico" viewBox="0 0 24 24"><path d="M4 8l8 8 8-8"/></svg></span>
            <span class="tools-sep"></span>
            <span class="tool-btn d-flex align-items-center justify-content-center"><svg class="stroke-ico"><use href="#u-route"/></svg></span>
            <span class="tool-btn tool-on tools-gap d-flex align-items-center justify-content-center"><svg class="stroke-ico"><use href="#u-route-auto"/></svg></span>
            <span class="tool-btn tools-gap d-flex align-items-center justify-content-center"><svg class="stroke-ico"><use href="#u-link"/></svg></span>
        </div>
        <div class="flex-grow-1 d-flex">
            <div class="diagram">
                <span class="grid-h"></span><span class="grid-v"></span>
                <svg class="edge-layer" viewBox="1060 157 590 892" fill="none" stroke="#222" stroke-width="1.600">
                    <path d="M1150.300 424V382M1145 394l5.300-13 5.300 13"/>
                    <path d="M1553.300 381V396q0 6-6 6H1187.300q-6 0-6-6V392" stroke="#444" stroke-width="2"/>
                    <path d="M1181.300 379.500 1176 394h11z" fill="#000" stroke="#000"/>
                    <circle cx="1553.300" cy="381" r="4.800" fill="#000" stroke="none"/>
                    <path d="M1150.300 523V494" stroke-dasharray="2 2"/>
                    <path d="M1150.300 481.500 1141 494h18.600z" fill="#fff" stroke="#111" stroke-width="1.800"/>
                    <path d="M1561.300 521V508q0-5.700-5.700-5.700H1187q-5.700 0-5.700 5.700v4" stroke="#111"/>
                    <path d="M1181.300 525 1176 510h11z" fill="#000" stroke="#000"/>
                    <circle cx="1561.300" cy="521" r="4.800" fill="#000" stroke="none"/>
                    <path d="M1150.300 636V587M1145 600l5.300-13 5.300 13"/>
                    <path d="M1150.300 735V706" stroke-dasharray="2 2"/>
                    <path d="M1150.300 693 1141 706h18.600z" fill="#fff" stroke="#111" stroke-width="1.800"/>
                    <path d="M1212 776.700H1249.500" stroke-dasharray="2 2" stroke-width="2"/>
                    <path d="M1262.400 777 1249.500 767.500V786.500z" fill="#fff" stroke="#111" stroke-width="1.800"/>
                    <path d="M1149.200 835V813L1150.300 793M1145 805l5.300-13 5.300 13"/>
                </svg>

                <div class="diag-node node-yellow at-role">Роль Партнер<svg class="node-glyph t-biz"><use href="#a-role"/></svg><span class="node-lock"><svg><use href="#u-lock"/></svg></span></div>
                <div class="diag-node node-yellow at-user">Пользователь<br>сервиса<svg class="node-glyph t-biz"><use href="#a-actor"/></svg><span class="node-lock"><svg><use href="#u-lock"/></svg></span></div>
                <div class="diag-node node-yellow node-round at-service">Сервис выдачи<br>кредитов<svg class="node-glyph t-biz"><use href="#a-service"/></svg><span class="node-lock"><svg><use href="#u-lock"/></svg></span></div>
                <div class="diag-node node-yellow node-round at-score">Скоринг<svg class="node-glyph t-biz"><use href="#a-process"/></svg><span class="node-lock"><svg><use href="#u-lock"/></svg></span></div>
                <div class="diag-node node-yellow at-designer">Дизайнер<br>процессов<svg class="node-glyph t-biz"><use href="#a-actor"/></svg><span class="node-lock"><svg><use href="#u-lock"/></svg></span></div>
                <div class="diag-node node-cyan at-assess">Оценка<br>надежности<br>клиента<svg class="node-glyph t-app"><use href="#a-service"/></svg><span class="node-lock"><svg><use href="#u-lock"/></svg></span></div>
                <div class="diag-node node-cyan at-server">Сервер<br>приложений<svg class="node-glyph t-app"><use href="#a-comp"/></svg><span class="node-lock"><svg><use href="#u-lock"/></svg></span></div>
                <div class="diag-node node-cyan at-offer">Next Best Offer<svg class="node-glyph t-app"><use href="#a-service"/></svg><span class="node-lock"><svg><use href="#u-lock"/></svg></span></div>
                <div class="diag-node node-yellow at-bactor">BusinessActor<svg class="node-glyph t-biz"><use href="#a-actor"/></svg><span class="node-lock"><svg><use href="#u-lock"/></svg></span></div>
                <div class="diag-node node-green node-round at-hw">Hardware<svg class="node-glyph t-tech"><use href="#a-service"/></svg><span class="node-lock"><svg><use href="#u-lock"/></svg></span></div>

                <div class="zoom-box">
                    <div class="zoom-btn d-flex align-items-center justify-content-center"><svg class="stroke-ico" viewBox="0 0 24 24"><path d="M12 3v18M3 12h18"/></svg></div>
                    <div class="zoom-btn d-flex align-items-center justify-content-center"><svg class="stroke-ico" viewBox="0 0 24 24"><path d="M3 12h18"/></svg></div>
                    <div class="zoom-btn d-flex align-items-center justify-content-center"><svg class="stroke-ico" viewBox="0 0 24 24"><path d="M3 8V5a2 2 0 0 1 2-2h3M16 3h3a2 2 0 0 1 2 2v3M21 16v3a2 2 0 0 1-2 2h-3M8 21H5a2 2 0 0 1-2-2v-3"/></svg></div>
                    <div class="zoom-btn d-flex align-items-center justify-content-center"><svg class="stroke-ico" viewBox="0 0 24 24"><rect x="2.500" y="2.500" width="19" height="19" stroke-dasharray="1.500 2"/><rect x="8" y="8" width="8" height="8" rx="1"/></svg></div>
                    <div class="zoom-btn d-flex align-items-center justify-content-center"><svg class="stroke-ico" viewBox="0 0 24 24"><use href="#u-unlock"/></svg></div>
                </div>
            </div>

            <aside class="palette flex-grow-1">
                <div class="pal-head d-flex align-items-center justify-content-between"><span>Объекты</span><span class="pal-fold d-flex align-items-center justify-content-center"><svg class="stroke-ico" viewBox="0 0 24 24"><path d="M5 5l7 7-7 7M13 5l7 7-7 7"/></svg></span></div>
                <div class="pal-box">
                    <div class="pal-title d-flex align-items-center"><svg class="stroke-ico" viewBox="0 0 24 24"><path d="M4 8l8 8 8-8"/></svg>Archimate</div>
                    <div class="pal-group">
                        <svg class="pal-ico"><use href="#r-compo"/></svg><svg class="pal-ico"><use href="#r-aggr"/></svg><svg class="pal-ico"><use href="#r-assign"/></svg><svg class="pal-ico"><use href="#r-real"/></svg><svg class="pal-ico"><use href="#r-serve"/></svg>
                        <svg class="pal-ico"><use href="#r-access"/></svg><svg class="pal-ico"><use href="#r-infl"/></svg><svg class="pal-ico"><use href="#r-trig"/></svg><svg class="pal-ico"><use href="#r-flow"/></svg><svg class="pal-ico"><use href="#r-spec"/></svg>
                        <svg class="pal-ico"><use href="#r-assoc"/></svg>
                    </div>
                    <div class="pal-group">
                        <svg class="pal-ico t-note"><use href="#a-note"/></svg><svg class="pal-ico t-note"><use href="#a-group"/></svg>
                    </div>
                    <div class="pal-group">
                        <svg class="pal-ico t-none"><use href="#a-group"/></svg><svg class="pal-ico t-none"><use href="#a-loc"/></svg>
                    </div>
                    <div class="pal-group">
                        <svg class="pal-ico t-strat"><use href="#a-resource"/></svg><svg class="pal-ico t-strat"><use href="#a-capab"/></svg><svg class="pal-ico t-strat"><use href="#a-stream"/></svg><svg class="pal-ico t-strat"><use href="#a-course"/></svg>
                    </div>
                    <div class="pal-group">
                        <svg class="pal-ico t-biz"><use href="#a-actor"/></svg><svg class="pal-ico t-biz"><use href="#a-role"/></svg><svg class="pal-ico t-biz"><use href="#a-collab"/></svg><svg class="pal-ico t-biz"><use href="#a-iface"/></svg><svg class="pal-ico t-biz"><use href="#a-process"/></svg>
                        <svg class="pal-ico t-biz"><use href="#a-func"/></svg><svg class="pal-ico t-biz"><use href="#a-interact"/></svg><svg class="pal-ico t-biz"><use href="#a-event"/></svg><svg class="pal-ico t-biz"><use href="#a-service"/></svg><svg class="pal-ico t-biz"><use href="#a-object"/></svg>
                        <svg class="pal-ico t-biz"><use href="#a-contract"/></svg><svg class="pal-ico t-biz"><use href="#a-repr"/></svg><svg class="pal-ico t-biz"><use href="#a-product"/></svg>
                    </div>
                    <div class="pal-group">
                        <svg class="pal-ico t-app"><use href="#a-comp"/></svg><svg class="pal-ico t-app"><use href="#a-collab"/></svg><svg class="pal-ico t-app"><use href="#a-iface"/></svg><svg class="pal-ico t-app"><use href="#a-func"/></svg><svg class="pal-ico t-app"><use href="#a-interact"/></svg>
                        <svg class="pal-ico t-app"><use href="#a-process"/></svg><svg class="pal-ico t-app"><use href="#a-event"/></svg><svg class="pal-ico t-app"><use href="#a-service"/></svg><svg class="pal-ico t-app"><use href="#a-object"/></svg>
                    </div>
                    <div class="pal-group">
                        <svg class="pal-ico t-tech"><use href="#a-node"/></svg><svg class="pal-ico t-tech"><use href="#a-device"/></svg><svg class="pal-ico t-tech"><use href="#a-soft"/></svg><svg class="pal-ico t-tech"><use href="#a-collab"/></svg><svg class="pal-ico t-tech"><use href="#a-iface"/></svg>
                        <svg class="pal-ico t-tech"><use href="#a-path"/></svg><svg class="pal-ico t-tech"><use href="#a-network"/></svg><svg class="pal-ico t-tech"><use href="#a-func"/></svg><svg class="pal-ico t-tech"><use href="#a-process"/></svg><svg class="pal-ico t-tech"><use href="#a-interact"/></svg>
                        <svg class="pal-ico t-tech"><use href="#a-event"/></svg><svg class="pal-ico t-tech"><use href="#a-service"/></svg><svg class="pal-ico t-tech"><use href="#a-artifact"/></svg>
                    </div>
                    <div class="pal-group">
                        <svg class="pal-ico t-tech"><use href="#a-equip"/></svg><svg class="pal-ico t-tech"><use href="#a-factory"/></svg><svg class="pal-ico t-tech"><use href="#a-distrib"/></svg><svg class="pal-ico t-tech"><use href="#a-material"/></svg>
                    </div>
                    <div class="pal-group">
                        <svg class="pal-ico t-motiv"><use href="#a-role"/></svg><svg class="pal-ico t-motiv"><use href="#a-driver"/></svg><svg class="pal-ico t-motiv"><use href="#a-assess"/></svg><svg class="pal-ico t-motiv"><use href="#a-goal"/></svg><svg class="pal-ico t-motiv"><use href="#a-outcome"/></svg>
                        <svg class="pal-ico t-motiv"><use href="#a-principle"/></svg><svg class="pal-ico t-motiv"><use href="#a-require"/></svg><svg class="pal-ico t-motiv"><use href="#a-value"/></svg><svg class="pal-ico t-motiv"><use href="#a-cloud"/></svg><svg class="pal-ico t-motiv"><use href="#a-constr"/></svg>
                    </div>
                    <div class="pal-group">
                        <svg class="pal-ico t-impl"><use href="#a-work"/></svg><svg class="pal-ico t-impl"><use href="#a-deliv"/></svg><svg class="pal-ico t-impl"><use href="#a-event"/></svg><svg class="pal-ico"><use href="#a-plateau"/></svg><svg class="pal-ico t-impl"><use href="#a-gap"/></svg>
                    </div>
                </div>
            </aside>
        </div>
    </section>
</main>
<script src="https://cdn.jsdelivr.net/npm/bootstrap@5.3.0/dist/js/bootstrap.bundle.min.js"></script>
</body>
</html>
